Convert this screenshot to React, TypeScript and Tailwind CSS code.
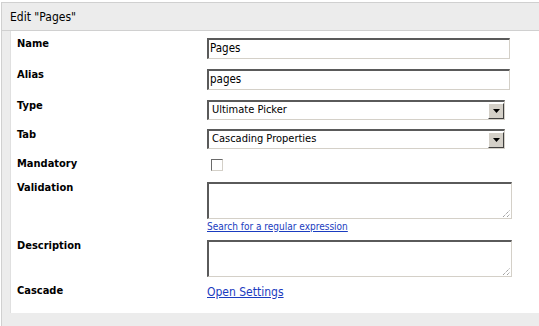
import React from "react";

const font = { fontFamily: '"DejaVu Sans Condensed", Tahoma, "DejaVu Sans", sans-serif' };

function Input({ value }: { value: string }) {
  return (
    <div className="w-[303px] h-[21px] border-t-2 border-l-2 border-b border-r border-t-[#5a5a5a] border-l-[#5a5a5a] border-b-[#d4d0c8] border-r-[#d4d0c8] bg-white flex items-center pl-[1px] text-[11.5px] text-black">
      {value}
    </div>
  );
}

function Select({ value }: { value: string }) {
  return (
    <div className="w-[298px] h-[20px] border-t-2 border-l-2 border-b border-r border-t-[#5a5a5a] border-l-[#5a5a5a] border-b-[#d4d0c8] border-r-[#d4d0c8] bg-white flex items-center justify-between text-[11px] text-black">
      <span className="pl-[3px]">{value}</span>
      <div className="w-[16px] h-[16px] bg-[#d4d0c8] border-t border-l border-b border-r border-t-white border-l-white border-b-[#404040] border-r-[#404040] flex items-center justify-center">
        <svg width="7" height="4" viewBox="0 0 7 4">
          <polygon points="0,0 7,0 3.5,4" fill="#000" />
        </svg>
      </div>
    </div>
  );
}

function TextArea() {
  return (
    <div className="relative w-[305px] h-[37px] border-t-2 border-l-2 border-b border-r border-t-[#5a5a5a] border-l-[#5a5a5a] border-b-[#d4d0c8] border-r-[#d4d0c8] bg-white">
      <svg className="absolute right-[1px] bottom-[1px]" width="8" height="8" viewBox="0 0 8 8">
        <line x1="1" y1="8" x2="8" y2="1" stroke="#777" strokeWidth="1" strokeDasharray="1 1" />
        <line x1="5" y1="8" x2="8" y2="5" stroke="#777" strokeWidth="1" strokeDasharray="1 1" />
      </svg>
    </div>
  );
}

function Label({ children }: { children: React.ReactNode }) {
  return <div className="w-[190px] shrink-0 text-[11px] font-bold leading-[12px] text-black">{children}</div>;
}

export default function App() {
  return (
    <div style={font} className="w-[539px] h-[326px] bg-white overflow-hidden">
      <div className="mt-[2px] ml-[1px] h-[324px] bg-[#ececec] border-l border-t border-[#d0d0d0] flex flex-col">
        <div className="h-[28px] pl-[8px] flex items-center text-[12px] text-black border-b border-[#d0d0d0]">
          Edit "Pages"
        </div>
        <div className="ml-[8px] h-[282px] bg-white border-l border-[#e0e0e0] pl-[6px] pt-[7px] flex flex-col">
          <div className="flex items-start mb-[10px]">
            <Label>Name</Label>
            <Input value="Pages" />
          </div>
          <div className="flex items-start mb-[10px]">
            <Label>Alias</Label>
            <Input value="pages" />
          </div>
          <div className="flex items-start mb-[9px]">
            <Label>Type</Label>
            <Select value="Ultimate Picker" />
          </div>
          <div className="flex items-start mb-[9px]">
            <Label>Tab</Label>
            <Select value="Cascading Properties" />
          </div>
          <div className="flex items-start mb-[10px] h-[14px]">
            <Label>Mandatory</Label>
            <div className="ml-[4px] mt-[1px] w-[12px] h-[12px] border-t border-l border-b border-r border-t-[#6a6a6a] border-l-[#6a6a6a] border-b-[#d4d0c8] border-r-[#d4d0c8] bg-white" />
          </div>
          <div className="flex items-start mb-[7px]">
            <Label>Validation</Label>
            <div className="flex flex-col">
              <TextArea />
              <a className="mt-[2px] text-[10px] leading-[12px] text-[#1a3cc0] underline" href="#">
                Search for a regular expression
              </a>
            </div>
          </div>
          <div className="flex items-start mb-[8px]">
            <Label>Description</Label>
            <TextArea />
          </div>
          <div className="flex items-start">
            <Label>Cascade</Label>
            <a className="text-[12px] leading-[14px] text-[#1a3cc0] underline" href="#">
              Open Settings
            </a>
          </div>
        </div>
      </div>
    </div>
  );
}
